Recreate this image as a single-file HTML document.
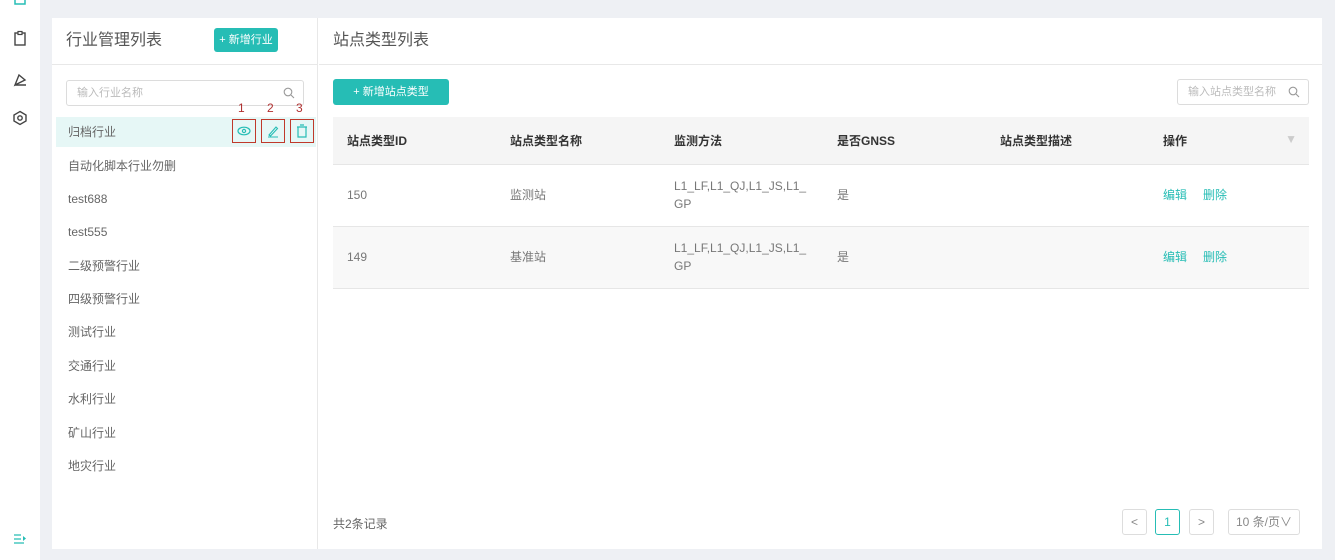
<!DOCTYPE html>
<html><head><meta charset="utf-8"><style>
*{box-sizing:border-box;margin:0;padding:0}
body{width:1335px;height:560px;overflow:hidden;background:#eef0f4;font-family:"Liberation Sans","Noto Sans CJK SC",sans-serif;position:relative;color:#666;font-size:12px}
.side{position:absolute;left:0;top:0;width:40px;height:560px;background:#fff}
.side svg{position:absolute;left:12px}
.panel{position:absolute;left:52px;top:18px;width:1270px;height:531px;background:#fff}
.lp{position:absolute;left:0;top:0;width:266px;height:531px;border-right:1px solid #e8e8e8}
.hd{height:47px;border-bottom:1px solid #e8e8e8;font-size:16px;color:#555;line-height:46px;padding-left:14px}
.btn{position:absolute;background:#26bdb5;color:#fff;border-radius:3px;font-size:11px;text-align:center}
.inp{position:absolute;border:1px solid #dcdcdc;border-radius:3px;color:#bbb;font-size:11px;line-height:24px;padding-left:10px}
.inp svg{position:absolute;right:8px;top:6px}
.li{position:absolute;left:4px;width:260px;height:30px;line-height:30px;padding-left:12px;color:#666}
.box{position:absolute;top:2px;width:24px;height:24px;border:1.5px solid #c0392b}
.box svg{position:absolute;left:2px;top:2px}
.num{position:absolute;top:-19px;left:5px;color:#b03030;font-size:12px;line-height:14px}
.rp{position:absolute;left:267px;top:0;width:1003px;height:531px}
table{position:absolute;left:14px;top:99px;width:976px;border-collapse:collapse}
th{background:#f5f5f5;height:47px;text-align:left;font-weight:bold;color:#333;font-size:12px;padding-left:14px;border-bottom:1px solid #e6e6e6}
td{height:62px;padding-left:14px;border-bottom:1px solid #e6e6e6;color:#777;font-size:12px;line-height:18px}
tr.alt td{background:#f8f8f8}
.lk{color:#26bdb5;margin-right:16px}
.pg{position:absolute;top:491px;height:26px;border:1px solid #ddd;border-radius:3px;text-align:center;line-height:24px;color:#888;font-size:12px}
</style></head><body>
<div class="side">
<svg style="top:-4px" width="16" height="12" viewBox="0 0 16 12"><rect x="3" y="2" width="10" height="6" fill="none" stroke="#26bdb5" stroke-width="1.5"/></svg>
<svg style="top:30px" width="16" height="16" viewBox="0 0 16 16"><rect x="3" y="3" width="10" height="12" fill="none" stroke="#444" stroke-width="1.4"/><rect x="6" y="1.5" width="4" height="3" fill="#fff" stroke="#444" stroke-width="1.2"/></svg>
<svg style="top:71px" width="16" height="16" viewBox="0 0 16 16"><path d="M3 14 L7 4 L13 9 Z M3 14 L14 14" fill="none" stroke="#444" stroke-width="1.4"/></svg>
<svg style="top:110px" width="16" height="16" viewBox="0 0 16 16"><path d="M8 1.5 L14 5 L14 11 L8 14.5 L2 11 L2 5 Z" fill="none" stroke="#444" stroke-width="1.4"/><circle cx="8" cy="8" r="2.2" fill="none" stroke="#444" stroke-width="1.4"/></svg>
<svg style="top:532px" width="16" height="14" viewBox="0 0 16 14"><path d="M2 3H9M2 7H9M2 11H12" stroke="#26bdb5" stroke-width="1.3"/><path d="M11 4 L14 6.5 L11 9Z" fill="#26bdb5"/></svg>
</div>
<div class="panel">
<div class="lp">
<div class="hd">行业管理列表</div>
<div class="btn" style="left:162px;top:10px;width:64px;height:24px;line-height:24px">+ 新增行业</div>
<div class="inp" style="left:14px;top:62px;width:238px;height:26px">输入行业名称<svg width="12" height="12" viewBox="0 0 12 12"><circle cx="5" cy="5" r="3.8" fill="none" stroke="#999" stroke-width="1.1"/><path d="M8 8L11 11" stroke="#999" stroke-width="1.1"/></svg></div>
<div class="li" style="top:99px;background:#e6f7f6">归档行业
<div class="box" style="left:176px"><span class="num">1</span><svg width="18" height="18" viewBox="0 0 18 18"><ellipse cx="9" cy="9" rx="6" ry="3.8" fill="none" stroke="#26bdb5" stroke-width="1.2"/><circle cx="9" cy="9" r="1.6" fill="none" stroke="#26bdb5" stroke-width="1.2"/></svg></div>
<div class="box" style="left:205px"><span class="num">2</span><svg width="18" height="18" viewBox="0 0 18 18"><path d="M5 13 L12 5 L13.5 6.5 L6.5 14 Z M4 15H14" fill="none" stroke="#26bdb5" stroke-width="1.1"/></svg></div>
<div class="box" style="left:234px"><span class="num">3</span><svg width="18" height="18" viewBox="0 0 18 18"><path d="M5 5H13V15H5Z M4 5H14 M7 3H11" fill="none" stroke="#26bdb5" stroke-width="1.2"/></svg></div>
</div>
<div class="li" style="top:133px">自动化脚本行业勿删</div>
<div class="li" style="top:166px">test688</div>
<div class="li" style="top:199px">test555</div>
<div class="li" style="top:233px">二级预警行业</div>
<div class="li" style="top:266px">四级预警行业</div>
<div class="li" style="top:299px">测试行业</div>
<div class="li" style="top:333px">交通行业</div>
<div class="li" style="top:366px">水利行业</div>
<div class="li" style="top:400px">矿山行业</div>
<div class="li" style="top:433px">地灾行业</div>
</div>
<div class="rp">
<div class="hd">站点类型列表</div>
<div class="btn" style="left:14px;top:61px;width:116px;height:26px;line-height:26px">+ 新增站点类型</div>
<div class="inp" style="left:858px;top:61px;width:132px;height:26px">输入站点类型名称<svg width="12" height="12" viewBox="0 0 12 12"><circle cx="5" cy="5" r="3.8" fill="none" stroke="#999" stroke-width="1.1"/><path d="M8 8L11 11" stroke="#999" stroke-width="1.1"/></svg></div>
<table>
<tr><th style="width:163px">站点类型ID</th><th style="width:164px">站点类型名称</th><th style="width:163px">监测方法</th><th style="width:163px">是否GNSS</th><th style="width:163px">站点类型描述</th><th>操作<span style="float:right;margin-right:12px;color:#ccc">▼</span></th></tr>
<tr><td>150</td><td>监测站</td><td>L1_LF,L1_QJ,L1_JS,L1_<br>GP</td><td>是</td><td></td><td><span class="lk">编辑</span><span class="lk">删除</span></td></tr>
<tr class="alt"><td>149</td><td>基准站</td><td>L1_LF,L1_QJ,L1_JS,L1_<br>GP</td><td>是</td><td></td><td><span class="lk">编辑</span><span class="lk">删除</span></td></tr>
</table>
<div style="position:absolute;left:14px;top:497px;color:#666">共2条记录</div>
<div class="pg" style="left:803px;width:25px">&lt;</div>
<div class="pg" style="left:836px;width:25px;border-color:#26bdb5;color:#26bdb5">1</div>
<div class="pg" style="left:870px;width:25px">&gt;</div>
<div class="pg" style="left:909px;width:72px">10 条/页∨</div>
</div>
</div>
</body></html>
